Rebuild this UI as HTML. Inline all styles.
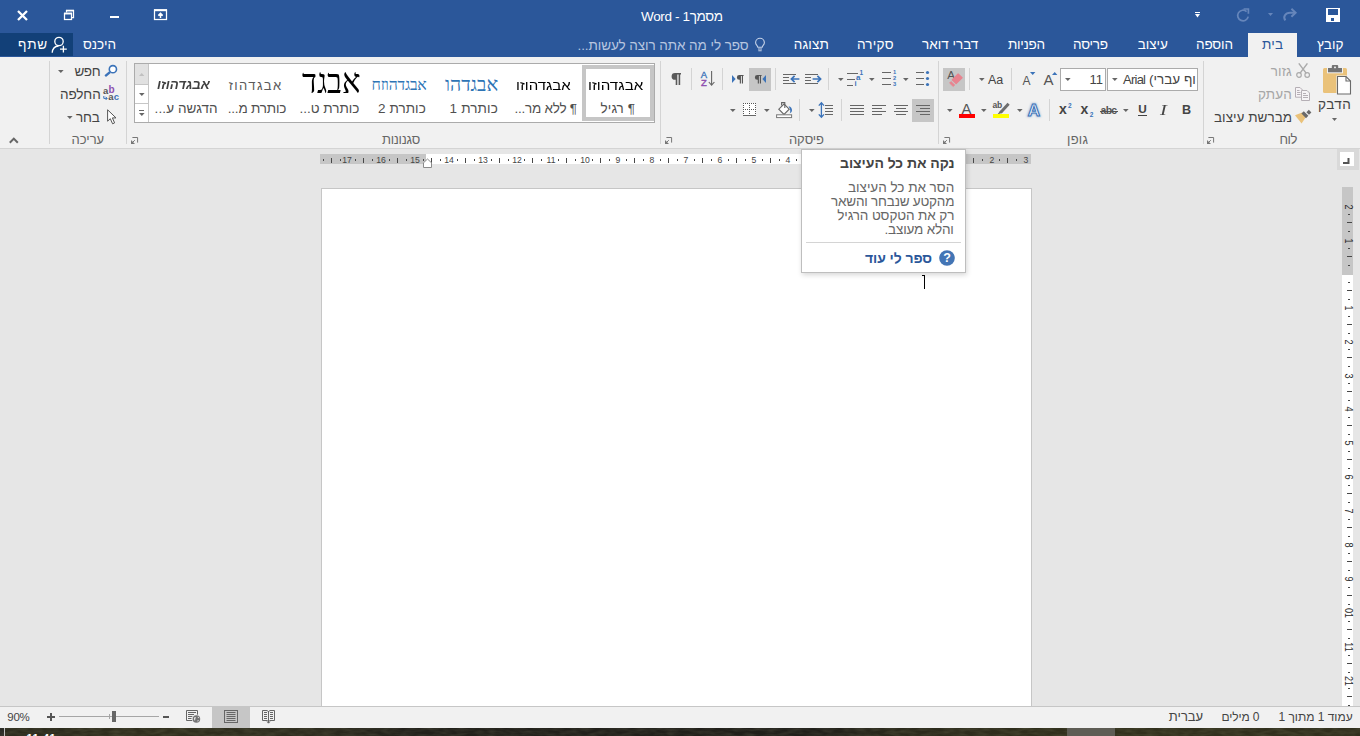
<!DOCTYPE html>
<html lang="he"><head><meta charset="utf-8"><title>Word</title>
<style>
html,body{margin:0;padding:0}
body{width:1360px;height:736px;overflow:hidden;position:relative;background:#e6e6e6;font-family:"Liberation Sans",sans-serif}
.a{position:absolute}
.t{position:absolute;white-space:nowrap;line-height:1}
svg{position:absolute;overflow:visible}
</style></head><body>
<div class="a" style="left:0px;top:0px;width:1360px;height:57px;background:#2b579a;"></div>
<div class="a" style="left:0px;top:33px;width:73px;height:23px;background:#124078;"></div>
<div class="a" style="left:1248px;top:33px;width:49px;height:24px;background:#f1f1f1;"></div>
<div class="a" style="left:0px;top:57px;width:1360px;height:91px;background:#f1f1f1;"></div>
<div class="a" style="left:49px;top:61px;width:1px;height:83px;background:#d4d4d4;"></div>
<div class="a" style="left:126px;top:61px;width:1px;height:83px;background:#d4d4d4;"></div>
<div class="a" style="left:660px;top:61px;width:1px;height:83px;background:#d4d4d4;"></div>
<div class="a" style="left:938px;top:61px;width:1px;height:83px;background:#d4d4d4;"></div>
<div class="a" style="left:1203px;top:61px;width:1px;height:83px;background:#d4d4d4;"></div>
<div class="a" style="left:691px;top:68px;width:1px;height:22px;background:#d4d4d4;"></div>
<div class="a" style="left:722px;top:68px;width:1px;height:22px;background:#d4d4d4;"></div>
<div class="a" style="left:775px;top:68px;width:1px;height:22px;background:#d4d4d4;"></div>
<div class="a" style="left:828px;top:68px;width:1px;height:22px;background:#d4d4d4;"></div>
<div class="a" style="left:969px;top:68px;width:1px;height:22px;background:#d4d4d4;"></div>
<div class="a" style="left:1011px;top:68px;width:1px;height:22px;background:#d4d4d4;"></div>
<div class="a" style="left:799px;top:99px;width:1px;height:22px;background:#d4d4d4;"></div>
<div class="a" style="left:841px;top:99px;width:1px;height:22px;background:#d4d4d4;"></div>
<div class="a" style="left:1049px;top:99px;width:1px;height:22px;background:#d4d4d4;"></div>
<div class="a" style="left:749px;top:68px;width:22px;height:23px;background:#c6c6c6;"></div>
<div class="a" style="left:943px;top:68px;width:22px;height:23px;background:#c6c6c6;"></div>
<div class="a" style="left:912px;top:99px;width:22px;height:23px;background:#c6c6c6;"></div>
<div class="a" style="left:1060px;top:68px;width:46px;height:23px;background:#fff;border:1px solid #ababab;box-sizing:border-box"></div>
<div class="a" style="left:1107px;top:68px;width:91px;height:23px;background:#fff;border:1px solid #ababab;box-sizing:border-box"></div>
<div class="a" style="left:134px;top:63px;width:521px;height:60px;background:#fff;border:1px solid #ababab;box-sizing:border-box"></div>
<div class="a" style="left:135px;top:64px;width:14px;height:20px;background:#e1e1e1;"></div>
<div class="a" style="left:148px;top:64px;width:1px;height:58px;background:#c6c6c6;"></div>
<div class="a" style="left:135px;top:84px;width:13px;height:1px;background:#c6c6c6;"></div>
<div class="a" style="left:135px;top:103px;width:13px;height:1px;background:#c6c6c6;"></div>
<div class="a" style="left:582px;top:65px;width:72px;height:56px;background:#fff;border:4px solid #c6c6c6;box-sizing:border-box"></div>
<div class="a" style="left:0px;top:148px;width:1360px;height:558px;background:#e6e6e6;"></div>
<div class="a" style="left:0px;top:148px;width:1360px;height:1px;background:#d4d4d4;"></div>
<div class="a" style="left:320px;top:154px;width:711px;height:10px;background:#fff;"></div>
<div class="a" style="left:320px;top:154px;width:106px;height:10px;background:#c6c6c6;"></div>
<div class="a" style="left:925px;top:154px;width:106px;height:10px;background:#c6c6c6;"></div>
<div class="a" style="left:321px;top:188px;width:711px;height:519px;background:#fff;border:1px solid #c6c6c6;box-sizing:border-box;border-bottom:none"></div>
<div class="a" style="left:1342px;top:187px;width:11px;height:519px;background:#fff;"></div>
<div class="a" style="left:1342px;top:187px;width:11px;height:88px;background:#c6c6c6;"></div>
<div class="a" style="left:1337px;top:149px;width:22px;height:21px;background:#d9d9d9;"></div>
<div class="a" style="left:1340px;top:152px;width:14px;height:14px;background:#fff;"></div>
<div class="a" style="left:0px;top:706px;width:1360px;height:22px;background:#f1f1f1;border-top:1px solid #c6c6c6;box-sizing:border-box"></div>
<div class="a" style="left:212px;top:707px;width:38px;height:21px;background:#c6c6c6;"></div>
<div class="a" style="left:0px;top:728px;width:1360px;height:8px;background:#2c2b20;background:linear-gradient(90deg,#262622 0,#262622 4px,#2b2a1d 5px,#302f1d 12%,#2c2b1e 24%,#22211b 30%,#201f1a 60%,#2b2a1c 66%,#32311d 80%,#302f1d 100%)"></div>
<svg style="left:0;top:728px" width="1360" height="8"><filter id="nz" x="0" y="0" width="100%" height="100%"><feTurbulence type="fractalNoise" baseFrequency="0.09 0.3" numOctaves="2" seed="7"/><feColorMatrix values="0 0 0 0 0.5  0 0 0 0 0.5  0 0 0 0 0.3  0.9 0 0 0 -0.28"/></filter><rect width="1360" height="8" filter="url(#nz)" opacity="0.28"/></svg>
<div class="a" style="left:1067px;top:728px;width:48px;height:8px;background:#5e5d55;"></div>
<div class="a" style="left:4px;top:728px;width:1px;height:8px;background:#bdbdbd;"></div>
<div class="t" style="left:26.6px;top:732.8px;font-size:11px;font-weight:bold;color:#fff;letter-spacing:0.4px">11:41</div>
<div class="a" style="left:801px;top:149px;width:165px;height:124px;background:#fff;border:1px solid #bebebe;box-sizing:border-box;box-shadow:1px 2px 5px rgba(0,0,0,.16)"></div>
<div class="a" style="left:806px;top:242px;width:155px;height:1px;background:#d4d4d4;"></div>
<div class="a" style="left:924px;top:275px;width:1px;height:14px;background:#000;"></div>
<div class="a" style="left:922px;top:275px;width:2px;height:1px;background:#000;"></div>
<div class="a" style="left:323px;top:159px;width:1px;height:2px;background:#484848"></div>
<div class="a" style="left:331px;top:158px;width:1px;height:5px;background:#484848"></div>
<div class="a" style="left:340px;top:159px;width:1px;height:2px;background:#484848"></div>
<div class="t" style="left:347.09999999999997px;top:159.7px;font-size:9.8px;color:#444;transform:translate(-50%,-50%) scaleX(0.88)">17</div>
<div class="a" style="left:355px;top:159px;width:1px;height:2px;background:#484848"></div>
<div class="a" style="left:363px;top:158px;width:1px;height:5px;background:#484848"></div>
<div class="a" style="left:372px;top:159px;width:1px;height:2px;background:#484848"></div>
<div class="t" style="left:381.02px;top:159.7px;font-size:9.8px;color:#444;transform:translate(-50%,-50%) scaleX(0.88)">16</div>
<div class="a" style="left:389px;top:159px;width:1px;height:2px;background:#484848"></div>
<div class="a" style="left:397px;top:158px;width:1px;height:5px;background:#484848"></div>
<div class="a" style="left:406px;top:159px;width:1px;height:2px;background:#484848"></div>
<div class="t" style="left:414.94px;top:159.7px;font-size:9.8px;color:#444;transform:translate(-50%,-50%) scaleX(0.88)">15</div>
<div class="a" style="left:423px;top:159px;width:1px;height:2px;background:#484848"></div>
<div class="a" style="left:431px;top:158px;width:1px;height:5px;background:#484848"></div>
<div class="a" style="left:440px;top:159px;width:1px;height:2px;background:#484848"></div>
<div class="t" style="left:448.85999999999996px;top:159.7px;font-size:9.8px;color:#444;transform:translate(-50%,-50%) scaleX(0.88)">14</div>
<div class="a" style="left:457px;top:159px;width:1px;height:2px;background:#484848"></div>
<div class="a" style="left:465px;top:158px;width:1px;height:5px;background:#484848"></div>
<div class="a" style="left:474px;top:159px;width:1px;height:2px;background:#484848"></div>
<div class="t" style="left:482.78px;top:159.7px;font-size:9.8px;color:#444;transform:translate(-50%,-50%) scaleX(0.88)">13</div>
<div class="a" style="left:491px;top:159px;width:1px;height:2px;background:#484848"></div>
<div class="a" style="left:499px;top:158px;width:1px;height:5px;background:#484848"></div>
<div class="a" style="left:508px;top:159px;width:1px;height:2px;background:#484848"></div>
<div class="t" style="left:516.7px;top:159.7px;font-size:9.8px;color:#444;transform:translate(-50%,-50%) scaleX(0.88)">12</div>
<div class="a" style="left:524px;top:159px;width:1px;height:2px;background:#484848"></div>
<div class="a" style="left:532px;top:158px;width:1px;height:5px;background:#484848"></div>
<div class="a" style="left:541px;top:159px;width:1px;height:2px;background:#484848"></div>
<div class="t" style="left:550.62px;top:159.7px;font-size:9.8px;color:#444;transform:translate(-50%,-50%) scaleX(0.88)">11</div>
<div class="a" style="left:558px;top:159px;width:1px;height:2px;background:#484848"></div>
<div class="a" style="left:566px;top:158px;width:1px;height:5px;background:#484848"></div>
<div class="a" style="left:575px;top:159px;width:1px;height:2px;background:#484848"></div>
<div class="t" style="left:584.54px;top:159.7px;font-size:9.8px;color:#444;transform:translate(-50%,-50%) scaleX(0.88)">10</div>
<div class="a" style="left:592px;top:159px;width:1px;height:2px;background:#484848"></div>
<div class="a" style="left:600px;top:158px;width:1px;height:5px;background:#484848"></div>
<div class="a" style="left:609px;top:159px;width:1px;height:2px;background:#484848"></div>
<div class="t" style="left:618.46px;top:159.7px;font-size:9.8px;color:#444;transform:translate(-50%,-50%) scaleX(0.88)">9</div>
<div class="a" style="left:626px;top:159px;width:1px;height:2px;background:#484848"></div>
<div class="a" style="left:634px;top:158px;width:1px;height:5px;background:#484848"></div>
<div class="a" style="left:643px;top:159px;width:1px;height:2px;background:#484848"></div>
<div class="t" style="left:652.3800000000001px;top:159.7px;font-size:9.8px;color:#444;transform:translate(-50%,-50%) scaleX(0.88)">8</div>
<div class="a" style="left:660px;top:159px;width:1px;height:2px;background:#484848"></div>
<div class="a" style="left:668px;top:158px;width:1px;height:5px;background:#484848"></div>
<div class="a" style="left:677px;top:159px;width:1px;height:2px;background:#484848"></div>
<div class="t" style="left:686.3000000000001px;top:159.7px;font-size:9.8px;color:#444;transform:translate(-50%,-50%) scaleX(0.88)">7</div>
<div class="a" style="left:694px;top:159px;width:1px;height:2px;background:#484848"></div>
<div class="a" style="left:702px;top:158px;width:1px;height:5px;background:#484848"></div>
<div class="a" style="left:711px;top:159px;width:1px;height:2px;background:#484848"></div>
<div class="t" style="left:720.22px;top:159.7px;font-size:9.8px;color:#444;transform:translate(-50%,-50%) scaleX(0.88)">6</div>
<div class="a" style="left:728px;top:159px;width:1px;height:2px;background:#484848"></div>
<div class="a" style="left:736px;top:158px;width:1px;height:5px;background:#484848"></div>
<div class="a" style="left:745px;top:159px;width:1px;height:2px;background:#484848"></div>
<div class="t" style="left:754.1400000000001px;top:159.7px;font-size:9.8px;color:#444;transform:translate(-50%,-50%) scaleX(0.88)">5</div>
<div class="a" style="left:762px;top:159px;width:1px;height:2px;background:#484848"></div>
<div class="a" style="left:770px;top:158px;width:1px;height:5px;background:#484848"></div>
<div class="a" style="left:779px;top:159px;width:1px;height:2px;background:#484848"></div>
<div class="t" style="left:788.0600000000001px;top:159.7px;font-size:9.8px;color:#444;transform:translate(-50%,-50%) scaleX(0.88)">4</div>
<div class="a" style="left:796px;top:159px;width:1px;height:2px;background:#484848"></div>
<div class="t" style="left:991.5px;top:159.7px;font-size:9.8px;color:#444;transform:translate(-50%,-50%) scaleX(0.88)">2</div>
<div class="t" style="left:1025.6px;top:159.7px;font-size:9.8px;color:#444;transform:translate(-50%,-50%) scaleX(0.88)">3</div>
<div class="a" style="left:973px;top:158px;width:1px;height:5px;background:#484848"></div>
<div class="a" style="left:982px;top:159px;width:1px;height:2px;background:#484848"></div>
<div class="a" style="left:999px;top:159px;width:1px;height:2px;background:#484848"></div>
<div class="a" style="left:1007px;top:158px;width:1px;height:5px;background:#484848"></div>
<div class="a" style="left:1016px;top:159px;width:1px;height:2px;background:#484848"></div>
<svg style="left:422px;top:158px" width="11" height="10" viewBox="0 0 11 10"><path d="M1.5 9.5V4.8L5.5 1l4 3.8v4.7z" fill="#fff" stroke="#8a8a8a" stroke-width="1"/></svg>
<div class="a" style="left:1348px;top:214px;width:2px;height:1px;background:#484848"></div>
<div class="a" style="left:1347px;top:222px;width:5px;height:1px;background:#484848"></div>
<div class="a" style="left:1348px;top:231px;width:2px;height:1px;background:#484848"></div>
<div class="a" style="left:1348px;top:248px;width:2px;height:1px;background:#484848"></div>
<div class="a" style="left:1347px;top:256px;width:5px;height:1px;background:#484848"></div>
<div class="a" style="left:1348px;top:265px;width:2px;height:1px;background:#484848"></div>
<div class="a" style="left:1348px;top:282px;width:2px;height:1px;background:#484848"></div>
<div class="a" style="left:1347px;top:290px;width:5px;height:1px;background:#484848"></div>
<div class="a" style="left:1348px;top:299px;width:2px;height:1px;background:#484848"></div>
<div class="a" style="left:1348px;top:316px;width:2px;height:1px;background:#484848"></div>
<div class="a" style="left:1347px;top:324px;width:5px;height:1px;background:#484848"></div>
<div class="a" style="left:1348px;top:333px;width:2px;height:1px;background:#484848"></div>
<div class="a" style="left:1348px;top:349px;width:2px;height:1px;background:#484848"></div>
<div class="a" style="left:1347px;top:357px;width:5px;height:1px;background:#484848"></div>
<div class="a" style="left:1348px;top:366px;width:2px;height:1px;background:#484848"></div>
<div class="a" style="left:1348px;top:383px;width:2px;height:1px;background:#484848"></div>
<div class="a" style="left:1347px;top:391px;width:5px;height:1px;background:#484848"></div>
<div class="a" style="left:1348px;top:400px;width:2px;height:1px;background:#484848"></div>
<div class="a" style="left:1348px;top:417px;width:2px;height:1px;background:#484848"></div>
<div class="a" style="left:1347px;top:425px;width:5px;height:1px;background:#484848"></div>
<div class="a" style="left:1348px;top:434px;width:2px;height:1px;background:#484848"></div>
<div class="a" style="left:1348px;top:451px;width:2px;height:1px;background:#484848"></div>
<div class="a" style="left:1347px;top:459px;width:5px;height:1px;background:#484848"></div>
<div class="a" style="left:1348px;top:468px;width:2px;height:1px;background:#484848"></div>
<div class="a" style="left:1348px;top:485px;width:2px;height:1px;background:#484848"></div>
<div class="a" style="left:1347px;top:493px;width:5px;height:1px;background:#484848"></div>
<div class="a" style="left:1348px;top:502px;width:2px;height:1px;background:#484848"></div>
<div class="a" style="left:1348px;top:519px;width:2px;height:1px;background:#484848"></div>
<div class="a" style="left:1347px;top:527px;width:5px;height:1px;background:#484848"></div>
<div class="a" style="left:1348px;top:536px;width:2px;height:1px;background:#484848"></div>
<div class="a" style="left:1348px;top:553px;width:2px;height:1px;background:#484848"></div>
<div class="a" style="left:1347px;top:561px;width:5px;height:1px;background:#484848"></div>
<div class="a" style="left:1348px;top:570px;width:2px;height:1px;background:#484848"></div>
<div class="a" style="left:1348px;top:587px;width:2px;height:1px;background:#484848"></div>
<div class="a" style="left:1347px;top:595px;width:5px;height:1px;background:#484848"></div>
<div class="a" style="left:1348px;top:604px;width:2px;height:1px;background:#484848"></div>
<div class="a" style="left:1348px;top:621px;width:2px;height:1px;background:#484848"></div>
<div class="a" style="left:1347px;top:629px;width:5px;height:1px;background:#484848"></div>
<div class="a" style="left:1348px;top:638px;width:2px;height:1px;background:#484848"></div>
<div class="a" style="left:1348px;top:655px;width:2px;height:1px;background:#484848"></div>
<div class="a" style="left:1347px;top:663px;width:5px;height:1px;background:#484848"></div>
<div class="a" style="left:1348px;top:672px;width:2px;height:1px;background:#484848"></div>
<div class="a" style="left:1348px;top:688px;width:2px;height:1px;background:#484848"></div>
<div class="a" style="left:1347px;top:696px;width:5px;height:1px;background:#484848"></div>
<div class="a" style="left:1348px;top:705px;width:2px;height:1px;background:#484848"></div>
<div class="t" style="left:1348px;top:206.6px;font-size:10.3px;color:#2a2a2a;transform:translate(-50%,-50%) rotate(90deg) scaleX(0.88)">2</div>
<div class="t" style="left:1348px;top:240.5px;font-size:10.3px;color:#2a2a2a;transform:translate(-50%,-50%) rotate(90deg) scaleX(0.88)">1</div>
<div class="t" style="left:1348px;top:307.69999999999993px;font-size:10.3px;color:#2a2a2a;transform:translate(-50%,-50%) rotate(90deg) scaleX(0.88)">1</div>
<div class="t" style="left:1348px;top:341.59999999999997px;font-size:10.3px;color:#2a2a2a;transform:translate(-50%,-50%) rotate(90deg) scaleX(0.88)">2</div>
<div class="t" style="left:1348px;top:375.49999999999994px;font-size:10.3px;color:#2a2a2a;transform:translate(-50%,-50%) rotate(90deg) scaleX(0.88)">3</div>
<div class="t" style="left:1348px;top:409.4px;font-size:10.3px;color:#2a2a2a;transform:translate(-50%,-50%) rotate(90deg) scaleX(0.88)">4</div>
<div class="t" style="left:1348px;top:443.29999999999995px;font-size:10.3px;color:#2a2a2a;transform:translate(-50%,-50%) rotate(90deg) scaleX(0.88)">5</div>
<div class="t" style="left:1348px;top:477.19999999999993px;font-size:10.3px;color:#2a2a2a;transform:translate(-50%,-50%) rotate(90deg) scaleX(0.88)">6</div>
<div class="t" style="left:1348px;top:511.0999999999999px;font-size:10.3px;color:#2a2a2a;transform:translate(-50%,-50%) rotate(90deg) scaleX(0.88)">7</div>
<div class="t" style="left:1348px;top:544.9999999999999px;font-size:10.3px;color:#2a2a2a;transform:translate(-50%,-50%) rotate(90deg) scaleX(0.88)">8</div>
<div class="t" style="left:1348px;top:578.9px;font-size:10.3px;color:#2a2a2a;transform:translate(-50%,-50%) rotate(90deg) scaleX(0.88)">9</div>
<div class="t" style="left:1348px;top:612.8px;font-size:10.3px;color:#2a2a2a;transform:translate(-50%,-50%) rotate(90deg) scaleX(0.88)">01</div>
<div class="t" style="left:1348px;top:646.6999999999999px;font-size:10.3px;color:#2a2a2a;transform:translate(-50%,-50%) rotate(90deg) scaleX(0.88)">11</div>
<div class="t" style="left:1348px;top:680.5999999999999px;font-size:10.3px;color:#2a2a2a;transform:translate(-50%,-50%) rotate(90deg) scaleX(0.88)">21</div>
<svg style="left:1343px;top:158px" width="7" height="6" viewBox="0 0 7 6"><path d="M5.5 0V5H0" fill="none" stroke="#555" stroke-width="2"/></svg>
<!-- window controls -->
<svg style="left:17px;top:10px" width="11" height="11" viewBox="0 0 11 11"><path d="M1 1L10 10M10 1L1 10" stroke="#fff" stroke-width="2.3" fill="none"/></svg>
<svg style="left:64px;top:9px" width="11" height="12" viewBox="0 0 11 12"><path d="M2.5 3.5V1.5H9.5V8.5H7.5" fill="none" stroke="#fff" stroke-width="1.25"/><path d="M2 1.5H10" stroke="#fff" stroke-width="1.6"/><rect x="0.5" y="4.5" width="7" height="6" fill="none" stroke="#fff" stroke-width="1.25"/><path d="M0 4.5H8" stroke="#fff" stroke-width="1.8"/></svg>
<div class="a" style="left:110px;top:16px;width:9px;height:2px;background:#fff"></div>
<svg style="left:154px;top:9px" width="13" height="11" viewBox="0 0 13 11"><rect x="0.5" y="1" width="12" height="9.5" fill="none" stroke="#fff" stroke-width="1.25"/><path d="M0 1.2H13" stroke="#fff" stroke-width="2"/><path d="M6.5 9V4.5M4.3 6.6L6.5 4.4L8.7 6.6" fill="none" stroke="#fff" stroke-width="1.5"/></svg>
<!-- save -->
<svg style="left:1326px;top:8px" width="14" height="14" viewBox="0 0 14 14"><path d="M0 0H14V14H0z" fill="#fff"/><rect x="2" y="1" width="10" height="6" fill="#2b579a"/><rect x="5" y="10" width="3" height="3" fill="#2b579a"/></svg>
<!-- redo (disabled) -->
<svg style="left:1283px;top:8px" width="14" height="13" viewBox="0 0 14 13"><path d="M2.4 12.4C-0.4 8.8 2.4 4.8 7 4.8H12" fill="none" stroke="#6686bb" stroke-width="2"/><path d="M8.4 0.8L12.6 4.8L8.4 8.8" fill="none" stroke="#6686bb" stroke-width="2"/></svg>
<svg style="left:1268px;top:13px" width="5" height="3" viewBox="0 0 5 3"><path d="M0 0H5L2.5 3z" fill="#6686bb"/></svg>
<!-- undo/repeat (disabled) -->
<svg style="left:1236px;top:8px" width="14" height="13" viewBox="0 0 14 13"><path d="M10.6 3.6A5.3 5.3 0 1 0 12.2 8.6" fill="none" stroke="#6686bb" stroke-width="1.7"/><path d="M7.6 1H12.4V5.8" fill="none" stroke="#6686bb" stroke-width="1.7"/></svg>
<!-- QAT customize -->
<div class="a" style="left:1195px;top:12px;width:5px;height:1px;background:#fff"></div>
<svg style="left:1195px;top:14px" width="5" height="4" viewBox="0 0 5 4"><path d="M0 0H5L2.5 3.4z" fill="#fff"/></svg>
<!-- lightbulb -->
<svg style="left:754px;top:38px" width="12" height="14" viewBox="0 0 12 14"><path d="M3.8 9.3C3.8 7.8 1.6 6.9 1.6 4.7A4.3 4.3 0 0 1 10.4 4.7C10.4 6.9 8.2 7.8 8.2 9.3z" fill="none" stroke="#c5d2e8" stroke-width="1.1"/><path d="M4 11H8M4.3 12.8H7.7" stroke="#c5d2e8" stroke-width="1.1"/></svg>
<!-- share person -->
<svg style="left:51px;top:36px" width="17" height="18" viewBox="0 0 17 18"><circle cx="8" cy="5.5" r="4.2" fill="none" stroke="#fff" stroke-width="1.3"/><path d="M1.2 16.8C1.5 12.8 4.2 10.2 7.6 10" fill="none" stroke="#fff" stroke-width="1.3"/><path d="M12.4 9.8V16.6M9 13.2H15.8" stroke="#fff" stroke-width="1.3"/></svg>
<!-- paste -->
<svg style="left:1323px;top:65px" width="29" height="30" viewBox="0 0 29 30"><rect x="0" y="3" width="24" height="25" rx="1.5" fill="#eac27a"/><rect x="4" y="2" width="16" height="6.3" fill="#f1f1f1"/><rect x="5" y="3" width="14" height="4.3" fill="#737373"/><rect x="8.8" y="0" width="6.4" height="4" rx="1" fill="#737373"/><rect x="11.2" y="1.6" width="1.6" height="1.6" fill="#fff"/><path d="M13.4 10.4H23.6L28.6 15.4V30H13.4z" fill="#f1f1f1"/><path d="M14.5 11.5H23L27.5 16V29H14.5z" fill="#fff" stroke="#6a6a6a" stroke-width="1.1"/><path d="M23 11.5V16H27.5" fill="none" stroke="#6a6a6a" stroke-width="1.1"/></svg>
<svg style="left:1332px;top:118px" width="5" height="3" viewBox="0 0 5 3"><path d="M0 0H5L2.5 3z" fill="#666"/></svg>
<!-- scissors (disabled) -->
<svg style="left:1296px;top:63px" width="15" height="15" viewBox="0 0 15 15"><path d="M2.8 0.4L10.3 10.4M11.4 0.4L3.9 10.4" stroke="#ababab" stroke-width="1.5" fill="none"/><circle cx="3" cy="12" r="2.3" fill="none" stroke="#ababab" stroke-width="1.2"/><circle cx="11.2" cy="12" r="2.3" fill="none" stroke="#ababab" stroke-width="1.2"/></svg>
<!-- copy (disabled) -->
<svg style="left:1295px;top:87px" width="16" height="14" viewBox="0 0 16 14"><path d="M0.5 0.5H5L7.5 3V10.2H0.5z" fill="#f6f3f6" stroke="#b5afb5" stroke-width="1"/><path d="M2 3.5H4.5M2 5.5H5.5M2 7.5H5.5" stroke="#b5afb5" stroke-width="1"/><path d="M6.5 3.5H12L14.5 6V13.5H6.5z" fill="#f6f3f6" stroke="#b5afb5" stroke-width="1"/><path d="M8 6.5H11M8 8.5H13M8 10.5H13" stroke="#b5afb5" stroke-width="1"/></svg>
<!-- format painter -->
<svg style="left:1295px;top:109px" width="17" height="15" viewBox="0 0 17 15"><path d="M0 6.2L7.2 3.6L11.2 7.6L6.6 14.4z" fill="#eac27a"/><path d="M7 3.2L9.4 0.8L14 5.4L11.6 7.8z" fill="#6a6a6a" transform="translate(-0.6,1.4)"/><path d="M11.2 2.6L13.6 0.2L16.2 2.8L13.8 5.2z" fill="#6a6a6a" transform="translate(0.2,0.6)"/></svg>
<svg style="left:57.7px;top:70px" width="6" height="3" viewBox="0 0 6 3"><path d="M0 0H5.6L2.8 3z" fill="#666"/></svg>
<svg style="left:67px;top:116px" width="6" height="3" viewBox="0 0 6 3"><path d="M0 0H5.6L2.8 3z" fill="#666"/></svg>
<svg style="left:730px;top:109px" width="6" height="3" viewBox="0 0 6 3"><path d="M0 0H5.6L2.8 3z" fill="#666"/></svg>
<svg style="left:764px;top:109px" width="6" height="3" viewBox="0 0 6 3"><path d="M0 0H5.6L2.8 3z" fill="#666"/></svg>
<svg style="left:809px;top:109px" width="6" height="3" viewBox="0 0 6 3"><path d="M0 0H5.6L2.8 3z" fill="#666"/></svg>
<svg style="left:838px;top:78px" width="6" height="3" viewBox="0 0 6 3"><path d="M0 0H5.6L2.8 3z" fill="#666"/></svg>
<svg style="left:869px;top:78px" width="6" height="3" viewBox="0 0 6 3"><path d="M0 0H5.6L2.8 3z" fill="#666"/></svg>
<svg style="left:903px;top:78px" width="6" height="3" viewBox="0 0 6 3"><path d="M0 0H5.6L2.8 3z" fill="#666"/></svg>
<svg style="left:947px;top:109px" width="6" height="3" viewBox="0 0 6 3"><path d="M0 0H5.6L2.8 3z" fill="#666"/></svg>
<svg style="left:981px;top:109px" width="6" height="3" viewBox="0 0 6 3"><path d="M0 0H5.6L2.8 3z" fill="#666"/></svg>
<svg style="left:1017px;top:109px" width="6" height="3" viewBox="0 0 6 3"><path d="M0 0H5.6L2.8 3z" fill="#666"/></svg>
<svg style="left:979px;top:78px" width="6" height="3" viewBox="0 0 6 3"><path d="M0 0H5.6L2.8 3z" fill="#666"/></svg>
<svg style="left:1065px;top:78px" width="6" height="3" viewBox="0 0 6 3"><path d="M0 0H5.6L2.8 3z" fill="#666"/></svg>
<svg style="left:1112px;top:78px" width="6" height="3" viewBox="0 0 6 3"><path d="M0 0H5.6L2.8 3z" fill="#666"/></svg>
<svg style="left:1123px;top:109px" width="6" height="3" viewBox="0 0 6 3"><path d="M0 0H5.6L2.8 3z" fill="#666"/></svg>
<div class="t" style="left:1182px;top:103.6px;font-size:12.6px;font-family:'Liberation Sans',sans-serif;color:#444;font-weight:bold">B</div>
<div class="t" style="left:1160.4px;top:102.6px;font-size:14.5px;font-family:'Liberation Serif',serif;color:#444;font-style:italic;transform:scaleX(1.4);transform-origin:0 0">I</div>
<div class="t" style="left:1138.2px;top:103.7px;font-size:11.8px;font-family:'Liberation Sans',sans-serif;color:#444;font-weight:bold">U</div>
<div class="a" style="left:1138px;top:115px;width:9px;height:1px;background:#444"></div>
<div class="t" style="left:1100.6px;top:104.9px;font-size:10.5px;font-family:'Liberation Sans',sans-serif;color:#555;font-weight:bold;letter-spacing:-0.75px">abc</div>
<div class="a" style="left:1100px;top:111px;width:18px;height:1px;background:#555"></div>
<div class="t" style="left:1080.6px;top:102px;font-size:14px;font-family:'Liberation Sans',sans-serif;color:#444;font-weight:bold">x</div>
<div class="t" style="left:1089.8px;top:111.6px;font-size:6.5px;font-family:'Liberation Sans',sans-serif;color:#3b73b9;font-weight:bold">2</div>
<div class="t" style="left:1059px;top:102px;font-size:14px;font-family:'Liberation Sans',sans-serif;color:#444;font-weight:bold">x</div>
<div class="t" style="left:1068px;top:102.6px;font-size:6.5px;font-family:'Liberation Sans',sans-serif;color:#3b73b9;font-weight:bold">2</div>
<svg style="left:1025px;top:100px" width="18" height="19" viewBox="0 0 18 19"><defs><filter id="gl" x="-30%" y="-30%" width="160%" height="160%"><feGaussianBlur stdDeviation="0.9"/></filter></defs><text x="9" y="15.6" text-anchor="middle" font-family="Liberation Sans" font-weight="bold" font-size="17" fill="none" stroke="#3b73b9" stroke-width="2.2" filter="url(#gl)" opacity="0.4">A</text><text x="9" y="15.6" text-anchor="middle" font-family="Liberation Sans" font-weight="bold" font-size="17" fill="#fff" stroke="#3b73b9" stroke-width="1.1">A</text></svg>
<div class="t" style="left:992.6px;top:101.2px;font-size:8.5px;font-family:'Liberation Sans',sans-serif;color:#555;font-weight:bold;letter-spacing:-0.3px">ab</div>
<svg style="left:996px;top:103px" width="14" height="12" viewBox="0 0 14 12"><path d="M12.6 0.8L4.6 9.4" stroke="#6e6e6e" stroke-width="3" fill="none"/><path d="M4.4 7.4L1.4 11.4L6.6 9.8z" fill="#6e6e6e"/></svg>
<div class="a" style="left:993px;top:114px;width:16px;height:4px;background:#ffff00"></div>
<div class="t" style="left:961.4px;top:101.5px;font-size:14.8px;font-family:'Liberation Sans',sans-serif;color:#555;">A</div>
<div class="a" style="left:959px;top:114px;width:16px;height:4px;background:#ff0000"></div>
<div class="t" style="left:947.2px;top:70.2px;font-size:11.5px;font-family:'Liberation Sans',sans-serif;color:#555;">A</div>
<svg style="left:948px;top:72px" width="16" height="16" viewBox="0 0 16 16"><path d="M10.1 1.9L14.1 5.7L8.1 11.6L4.2 7.9z" fill="#e8838f" stroke="#e8838f" stroke-width="1.2" stroke-linejoin="round"/><path d="M3 9.4L6.8 13L5.2 14.6L1.5 11z" fill="#e8838f" stroke="#e8838f" stroke-width="0.6" stroke-linejoin="round"/></svg>
<div class="t" style="left:1022.6px;top:74.6px;font-size:12px;font-family:'Liberation Sans',sans-serif;color:#555;">A</div>
<svg style="left:1030px;top:72px" width="6" height="3" viewBox="0 0 6 3"><path d="M0 0H5.4L2.7 3z" fill="#3b73b9"/></svg>
<div class="t" style="left:1043.4px;top:71.6px;font-size:15px;font-family:'Liberation Sans',sans-serif;color:#555;">A</div>
<svg style="left:1052px;top:72px" width="6" height="3" viewBox="0 0 6 3"><path d="M0 3H5.4L2.7 0z" fill="#3b73b9"/></svg>
<div class="a" style="left:916px;top:72px;width:8px;height:1px;background:#666"></div>
<svg style="left:926px;top:71px" width="3" height="3" viewBox="0 0 3 3"><circle cx="1.5" cy="1.5" r="1.6" fill="#3b73b9"/></svg>
<div class="a" style="left:916px;top:78px;width:8px;height:1px;background:#666"></div>
<svg style="left:926px;top:77px" width="3" height="3" viewBox="0 0 3 3"><circle cx="1.5" cy="1.5" r="1.6" fill="#3b73b9"/></svg>
<div class="a" style="left:916px;top:84px;width:8px;height:1px;background:#666"></div>
<svg style="left:926px;top:83px" width="3" height="3" viewBox="0 0 3 3"><circle cx="1.5" cy="1.5" r="1.6" fill="#3b73b9"/></svg>
<div class="a" style="left:882px;top:72px;width:9px;height:1px;background:#666"></div>
<div class="t" style="left:893px;top:69.8px;font-size:5.8px;font-family:'Liberation Sans',sans-serif;color:#3b73b9;font-weight:bold">1</div>
<div class="a" style="left:882px;top:78px;width:9px;height:1px;background:#666"></div>
<div class="t" style="left:893px;top:75.8px;font-size:5.8px;font-family:'Liberation Sans',sans-serif;color:#3b73b9;font-weight:bold">2</div>
<div class="a" style="left:882px;top:84px;width:9px;height:1px;background:#666"></div>
<div class="t" style="left:893px;top:81.8px;font-size:5.8px;font-family:'Liberation Sans',sans-serif;color:#3b73b9;font-weight:bold">3</div>
<div class="a" style="left:847px;top:73px;width:11px;height:1px;background:#666"></div>
<div class="t" style="left:859.6px;top:70.4px;font-size:6.5px;font-family:'Liberation Sans',sans-serif;color:#3b73b9;font-weight:bold">1</div>
<div class="a" style="left:847px;top:79px;width:8px;height:1px;background:#666"></div>
<div class="t" style="left:856px;top:74.2px;font-size:8px;font-family:'Liberation Sans',sans-serif;color:#3b73b9;font-weight:bold">a</div>
<div class="a" style="left:847px;top:85px;width:6px;height:1px;background:#666"></div>
<div class="t" style="left:854.4px;top:80.4px;font-size:7.5px;font-family:'Liberation Sans',sans-serif;color:#3b73b9;font-weight:bold">i</div>
<div class="a" style="left:783px;top:74px;width:13px;height:1px;background:#666"></div>
<div class="a" style="left:783px;top:77px;width:6px;height:1px;background:#666"></div>
<div class="a" style="left:783px;top:80px;width:6px;height:1px;background:#666"></div>
<div class="a" style="left:783px;top:83px;width:13px;height:1px;background:#666"></div>
<svg style="left:790px;top:75px" width="10" height="8" viewBox="0 0 10 8"><path d="M9.4 4H1.6M4.6 0.8L1.4 4L4.6 7.2" fill="none" stroke="#3b73b9" stroke-width="1.7"/></svg>
<div class="a" style="left:805px;top:74px;width:13px;height:1px;background:#666"></div>
<div class="a" style="left:805px;top:77px;width:6px;height:1px;background:#666"></div>
<div class="a" style="left:805px;top:80px;width:6px;height:1px;background:#666"></div>
<div class="a" style="left:805px;top:83px;width:13px;height:1px;background:#666"></div>
<svg style="left:812px;top:75px" width="10" height="8" viewBox="0 0 10 8"><path d="M0.6 4H8.4M5.4 0.8L8.6 4L5.4 7.2" fill="none" stroke="#3b73b9" stroke-width="1.7"/></svg>
<svg style="left:671px;top:73px" width="10" height="12" viewBox="0 0 10 12"><path d="M4.4 0H10V1.4H9.2V12H7.6V1.4H6.3V12H4.7V6.8H4A3.4 3.4 0 0 1 4 0z" fill="#5a5a5a"/></svg>
<svg style="left:732px;top:75px" width="4" height="8" viewBox="0 0 4 8"><path d="M0 0L3.6 4L0 8z" fill="#3b73b9"/></svg>
<svg style="left:736.4px;top:74.8px" width="8" height="8.6" viewBox="0 0 10 12"><path d="M4.4 0H10V1.4H9.2V12H7.6V1.4H6.3V12H4.7V6.8H4A3.4 3.4 0 0 1 4 0z" fill="#555"/></svg>
<svg style="left:753.6px;top:74.8px" width="8" height="8.6" viewBox="0 0 10 12"><path d="M4.4 0H10V1.4H9.2V12H7.6V1.4H6.3V12H4.7V6.8H4A3.4 3.4 0 0 1 4 0z" fill="#555"/></svg>
<svg style="left:762px;top:75px" width="4" height="8" viewBox="0 0 4 8"><path d="M4 0L0.4 4L4 8z" fill="#3b73b9"/></svg>
<div class="t" style="left:700.8px;top:70.3px;font-size:9.5px;font-family:'Liberation Sans',sans-serif;color:#3b73b9;-webkit-text-stroke:0.35px #3b73b9">A</div>
<div class="t" style="left:701px;top:78.3px;font-size:9.5px;font-family:'Liberation Sans',sans-serif;color:#8e4fb0;-webkit-text-stroke:0.35px #8e4fb0">Z</div>
<svg style="left:708px;top:71px" width="8" height="15" viewBox="0 0 8 15"><path d="M3.6 0V14M0.8 11L3.6 14.2L6.4 11" fill="none" stroke="#666" stroke-width="1.1"/></svg>
<div class="a" style="left:850px;top:105px;width:14px;height:1px;background:#666"></div>
<div class="a" style="left:850px;top:108px;width:14px;height:1px;background:#666"></div>
<div class="a" style="left:850px;top:111px;width:14px;height:1px;background:#666"></div>
<div class="a" style="left:850px;top:114px;width:14px;height:1px;background:#666"></div>
<div class="a" style="left:872px;top:105px;width:14px;height:1px;background:#666"></div>
<div class="a" style="left:872px;top:108px;width:10px;height:1px;background:#666"></div>
<div class="a" style="left:872px;top:111px;width:14px;height:1px;background:#666"></div>
<div class="a" style="left:872px;top:114px;width:10px;height:1px;background:#666"></div>
<div class="a" style="left:894px;top:105px;width:14px;height:1px;background:#666"></div>
<div class="a" style="left:896px;top:108px;width:10px;height:1px;background:#666"></div>
<div class="a" style="left:894px;top:111px;width:14px;height:1px;background:#666"></div>
<div class="a" style="left:896px;top:114px;width:10px;height:1px;background:#666"></div>
<div class="a" style="left:916px;top:105px;width:14px;height:1px;background:#666"></div>
<div class="a" style="left:920px;top:108px;width:10px;height:1px;background:#666"></div>
<div class="a" style="left:916px;top:111px;width:14px;height:1px;background:#666"></div>
<div class="a" style="left:920px;top:114px;width:10px;height:1px;background:#666"></div>
<svg style="left:818px;top:102px" width="7" height="16" viewBox="0 0 7 16"><path d="M3.4 0.8V15.2M0.8 3.6L3.4 0.8L6 3.6M0.8 12.4L3.4 15.2L6 12.4" fill="none" stroke="#3b73b9" stroke-width="1.3"/></svg>
<div class="a" style="left:825px;top:105px;width:8px;height:1px;background:#666"></div>
<div class="a" style="left:825px;top:108px;width:8px;height:1px;background:#666"></div>
<div class="a" style="left:825px;top:111px;width:8px;height:1px;background:#666"></div>
<div class="a" style="left:825px;top:114px;width:8px;height:1px;background:#666"></div>
<svg style="left:776px;top:101px" width="17" height="17" viewBox="0 0 17 17"><path d="M8 3L13.2 8.2L8 13.4L2.8 8.2z" fill="#fff" stroke="#666" stroke-width="1.1"/><path d="M5.6 4.6V1.6H8.8V7" fill="none" stroke="#666" stroke-width="1.1"/><path d="M12.6 5.2C15 5.6 16.2 7.6 16 9.6C15.8 11 15 12 13.8 12.2C14.6 10.6 14.6 8.4 12.6 5.2z" fill="#3b73b9"/><rect x="0.6" y="13.8" width="15" height="2.8" fill="#fff" stroke="#777" stroke-width="1"/></svg>
<svg style="left:743px;top:102px" width="14" height="14" viewBox="0 0 14 14"><rect x="0" y="1" width="13" height="12" fill="#fff"/><path d="M0 1.5H13M0 7.5H13M0.5 1V13M6.5 1V13M12.5 1V13" stroke="#555" stroke-width="1" stroke-dasharray="1 1" fill="none" shape-rendering="crispEdges"/><path d="M0 13.5H13" stroke="#666" stroke-width="1" shape-rendering="crispEdges"/></svg>
<svg style="left:104px;top:64px" width="14" height="14" viewBox="0 0 14 14"><circle cx="8.9" cy="5.2" r="3.6" fill="#fff" stroke="#3b73b9" stroke-width="1.6"/><path d="M6 8.2L1.2 12.2" stroke="#3b73b9" stroke-width="2.4" fill="none"/></svg>
<div class="t" style="left:103px;top:85.6px;font-size:9.5px;font-family:'Liberation Sans',sans-serif;color:#555;font-weight:bold">a</div>
<div class="t" style="left:108.6px;top:85.2px;font-size:10px;font-family:'Liberation Sans',sans-serif;color:#8e4fb0;font-weight:bold">b</div>
<div class="t" style="left:108.2px;top:92.4px;font-size:9.5px;font-family:'Liberation Sans',sans-serif;color:#555;font-weight:bold">a</div>
<div class="t" style="left:113.8px;top:92.4px;font-size:9.5px;font-family:'Liberation Sans',sans-serif;color:#3b73b9;font-weight:bold">c</div>
<svg style="left:103px;top:96px" width="5" height="5" viewBox="0 0 5 5"><path d="M0.8 0V2.4H4M2.6 0.8L4.2 2.4L2.6 4" fill="none" stroke="#3b73b9" stroke-width="1"/></svg>
<svg style="left:107px;top:109px" width="10" height="16" viewBox="0 0 10 16"><path d="M0.6 0.8V12.2L3.3 9.7L5.6 14.8L7.6 13.9L5.4 8.9H9z" fill="#fff" stroke="#555" stroke-width="1"/></svg>
<svg style="left:9px;top:137px" width="10" height="7" viewBox="0 0 10 7"><path d="M0.8 5.8L4.8 1.6L8.8 5.8" fill="none" stroke="#666" stroke-width="2"/></svg>
<svg style="left:139px;top:73px" width="6" height="3" viewBox="0 0 6 3"><path d="M0 3H5.4L2.7 0z" fill="#c0c0c0"/></svg>
<svg style="left:139px;top:93px" width="6" height="3" viewBox="0 0 6 3"><path d="M0 0H5.6L2.8 3z" fill="#666"/></svg>
<div class="a" style="left:139px;top:110px;width:5px;height:1px;background:#666"></div>
<svg style="left:139px;top:113px" width="6" height="3" viewBox="0 0 6 3"><path d="M0 0H5.6L2.8 3z" fill="#666"/></svg>
<svg style="left:131px;top:137px" width="8" height="8" viewBox="0 0 8 8"><path d="M1.4 0.5H6.6V5.6" fill="none" stroke="#777" stroke-width="1"/><path d="M0 3V7H4z" fill="#777"/><path d="M1.4 5.6L3.8 3.2" stroke="#777" stroke-width="1" fill="none"/></svg>
<svg style="left:665px;top:137px" width="8" height="8" viewBox="0 0 8 8"><path d="M1.4 0.5H6.6V5.6" fill="none" stroke="#777" stroke-width="1"/><path d="M0 3V7H4z" fill="#777"/><path d="M1.4 5.6L3.8 3.2" stroke="#777" stroke-width="1" fill="none"/></svg>
<svg style="left:943px;top:137px" width="8" height="8" viewBox="0 0 8 8"><path d="M1.4 0.5H6.6V5.6" fill="none" stroke="#777" stroke-width="1"/><path d="M0 3V7H4z" fill="#777"/><path d="M1.4 5.6L3.8 3.2" stroke="#777" stroke-width="1" fill="none"/></svg>
<svg style="left:1207px;top:137px" width="8" height="8" viewBox="0 0 8 8"><path d="M1.4 0.5H6.6V5.6" fill="none" stroke="#777" stroke-width="1"/><path d="M0 3V7H4z" fill="#777"/><path d="M1.4 5.6L3.8 3.2" stroke="#777" stroke-width="1" fill="none"/></svg>
<div class="a" style="left:47px;top:716px;width:8px;height:2px;background:#555"></div>
<div class="a" style="left:50px;top:713px;width:2px;height:8px;background:#555"></div>
<div class="a" style="left:59px;top:716px;width:100px;height:1px;background:#a6a6a6"></div>
<div class="a" style="left:109px;top:714px;width:1px;height:5px;background:#a6a6a6"></div>
<div class="a" style="left:112px;top:711px;width:4px;height:11px;background:#666"></div>
<div class="a" style="left:163px;top:716px;width:6px;height:2px;background:#555"></div>
<svg style="left:186px;top:710px" width="15" height="14" viewBox="0 0 15 14"><path d="M9 10.5H0.5V0.5H11.5V5" fill="none" stroke="#666" stroke-width="1"/><path d="M2 2.5H10M2 4.5H8M2 6.5H6.5M2 8.5H5.5" stroke="#666" stroke-width="1"/><circle cx="10.4" cy="9" r="4.5" fill="#f1f1f1"/><circle cx="10.4" cy="9" r="3.8" fill="#747474"/><path d="M8.2 7.6C8.8 6.8 9.8 6.8 9.8 7.6C9.8 8.4 9 8.8 9.2 9.8C9.3 10.6 8.8 10.8 8.4 10.2C8 9.4 7.9 8.4 8.2 7.6zM11.8 6.6C12.6 6.9 13.1 7.6 13.3 8.3C12.7 8.4 12.1 8.1 11.8 7.5zM11.6 10.2C12.2 9.9 12.7 10.2 12.7 10.8C12.4 11.3 12 11.6 11.6 11.7z" fill="#ededed"/></svg>
<svg style="left:224px;top:710px" width="14" height="13" viewBox="0 0 14 13"><rect x="0.5" y="0.5" width="13" height="12" fill="none" stroke="#666" stroke-width="1"/><path d="M2.5 2.5H11.5M2.5 4.5H11.5M2.5 6.5H11.5M2.5 8.5H11.5M2.5 10.5H11.5" stroke="#666" stroke-width="1"/></svg>
<svg style="left:262px;top:710px" width="14" height="14" viewBox="0 0 14 14"><path d="M0.5 0.5H5L6.5 1.6L8 0.5H12.5V10.5H8L6.5 11.6L5 10.5H0.5z" fill="none" stroke="#666" stroke-width="1"/><path d="M6.5 1V13M5 11.6L6.5 13.2L8 11.6" fill="none" stroke="#666" stroke-width="1"/><path d="M2 2.5H5M2 4.5H5M2 6.5H5M2 8.5H5M8 2.5H11M8 4.5H11M8 6.5H11M8 8.5H11" stroke="#666" stroke-width="1"/></svg>
<svg style="left:939px;top:250px" width="16" height="16" viewBox="0 0 16 16"><circle cx="8" cy="8" r="7.8" fill="#4375b5"/><text x="8" y="12.4" text-anchor="middle" font-family="Liberation Sans" font-weight="bold" font-size="12.5" fill="#fff">?</text></svg><div class="a" style="left:1108px;top:69px;width:89px;height:21px;overflow:hidden"><div class="t" dir="rtl" style="left:15px;top:3.7px;font-size:13.5px;color:#444">וף עברי) <span style="letter-spacing:-0.75px;font-size:13px">Arial</span></div></div>

<div class="t" dir="rtl" style="left:641.0px;top:9.67px;font-size:13.5px;font-family:'Liberation Sans',sans-serif;color:#ffffff;letter-spacing:-0.36px;">מסמך1 - Word</div>
<div class="t" dir="rtl" style="left:1317.0px;top:37.67px;font-size:13.5px;font-family:'Liberation Sans',sans-serif;color:#ffffff;letter-spacing:0.0px;">קובץ</div>
<div class="t" dir="rtl" style="left:1262.0px;top:37.67px;font-size:13.5px;font-family:'Liberation Sans',sans-serif;color:#2b579a;letter-spacing:0.25px;">בית</div>
<div class="t" dir="rtl" style="left:1196.0px;top:37.67px;font-size:13.5px;font-family:'Liberation Sans',sans-serif;color:#ffffff;letter-spacing:-0.15px;">הוספה</div>
<div class="t" dir="rtl" style="left:1137.8px;top:37.67px;font-size:13.5px;font-family:'Liberation Sans',sans-serif;color:#ffffff;letter-spacing:-0.05px;">עיצוב</div>
<div class="t" dir="rtl" style="left:1073.0px;top:37.67px;font-size:13.5px;font-family:'Liberation Sans',sans-serif;color:#ffffff;letter-spacing:-0.25px;">פריסה</div>
<div class="t" dir="rtl" style="left:1008.0px;top:37.67px;font-size:13.5px;font-family:'Liberation Sans',sans-serif;color:#ffffff;letter-spacing:-0.28px;">הפניות</div>
<div class="t" dir="rtl" style="left:922.0px;top:37.67px;font-size:13.5px;font-family:'Liberation Sans',sans-serif;color:#ffffff;letter-spacing:0.0px;">דברי דואר</div>
<div class="t" dir="rtl" style="left:857.0px;top:37.67px;font-size:13.5px;font-family:'Liberation Sans',sans-serif;color:#ffffff;letter-spacing:0.2px;">סקירה</div>
<div class="t" dir="rtl" style="left:793.8px;top:37.67px;font-size:13.5px;font-family:'Liberation Sans',sans-serif;color:#ffffff;letter-spacing:0.15px;">תצוגה</div>
<div class="t" dir="rtl" style="left:577.5px;top:38.67px;font-size:13.5px;font-family:'Liberation Sans',sans-serif;color:#b7c6e0;letter-spacing:-0.08px;">ספר לי מה אתה רוצה לעשות...</div>
<div class="t" dir="rtl" style="left:83.0px;top:37.67px;font-size:13.5px;font-family:'Liberation Sans',sans-serif;color:#ffffff;letter-spacing:0.0px;">היכנס</div>
<div class="t" dir="rtl" style="left:18.0px;top:37.67px;font-size:13.5px;font-family:'Liberation Sans',sans-serif;color:#ffffff;letter-spacing:0.75px;">שתף</div>
<div class="t" dir="rtl" style="left:1318.0px;top:97.67px;font-size:13.5px;font-family:'Liberation Sans',sans-serif;color:#444444;letter-spacing:0.47px;">הדבק</div>
<div class="t" dir="rtl" style="left:1270.75px;top:64.67px;font-size:13.5px;font-family:'Liberation Sans',sans-serif;color:#a6a6a6;letter-spacing:0.08px;">גזור</div>
<div class="t" dir="rtl" style="left:1258.0px;top:87.67px;font-size:13.5px;font-family:'Liberation Sans',sans-serif;color:#a6a6a6;letter-spacing:0.1px;">העתק</div>
<div class="t" dir="rtl" style="left:1214.0px;top:110.67px;font-size:13.5px;font-family:'Liberation Sans',sans-serif;color:#444444;letter-spacing:0.03px;">מברשת עיצוב</div>
<div class="t" dir="rtl" style="left:1279.5px;top:133.1px;font-size:13px;font-family:'Liberation Sans',sans-serif;color:#666666;letter-spacing:-0.5px;">לוח</div>
<div class="t" dir="rtl" style="left:1089.6px;top:73.1px;font-size:13px;font-family:'Liberation Sans',sans-serif;color:#444444;letter-spacing:-0.1px;">11</div>
<div class="t" dir="rtl" style="left:988.0px;top:73.52px;font-size:12.5px;font-family:'Liberation Sans',sans-serif;color:#444444;letter-spacing:0.0px;">Aa</div>
<div class="t" dir="rtl" style="left:1067.0px;top:133.1px;font-size:13px;font-family:'Liberation Sans',sans-serif;color:#666666;letter-spacing:0.25px;">גופן</div>
<div class="t" dir="rtl" style="left:789.0px;top:133.1px;font-size:13px;font-family:'Liberation Sans',sans-serif;color:#666666;letter-spacing:-0.12px;">פיסקה</div>
<div class="t" dir="rtl" style="left:382.0px;top:133.1px;font-size:13px;font-family:'Liberation Sans',sans-serif;color:#666666;letter-spacing:-0.27px;">סגנונות</div>
<div class="t" dir="rtl" style="left:71.5px;top:133.1px;font-size:13px;font-family:'Liberation Sans',sans-serif;color:#666666;letter-spacing:0.0px;">עריכה</div>
<div class="t" dir="rtl" style="left:74.4px;top:64.67px;font-size:13.5px;font-family:'Liberation Sans',sans-serif;color:#444444;letter-spacing:-0.4px;">חפש</div>
<div class="t" dir="rtl" style="left:60.0px;top:87.67px;font-size:13.5px;font-family:'Liberation Sans',sans-serif;color:#444444;letter-spacing:-0.1px;">החלפה</div>
<div class="t" dir="rtl" style="left:76.0px;top:110.67px;font-size:13.5px;font-family:'Liberation Sans',sans-serif;color:#444444;letter-spacing:-0.2px;">בחר</div>
<div class="t" dir="rtl" style="left:587.59px;top:79.1px;font-size:13px;font-family:'Liberation Sans',sans-serif;color:#000;letter-spacing:0.0px;transform:scaleX(1.163);transform-origin:0 0;">אבגדהוזו</div>
<div class="t" dir="rtl" style="left:600.6px;top:101.67px;font-size:13.5px;font-family:'Liberation Sans',sans-serif;color:#505050;letter-spacing:0.08px;">¶ רגיל</div>
<div class="t" dir="rtl" style="left:515.75px;top:79.1px;font-size:13px;font-family:'Liberation Sans',sans-serif;color:#000;letter-spacing:0.0px;transform:scaleX(1.1543);transform-origin:0 0;">אבגדהוזו</div>
<div class="t" dir="rtl" style="left:514.6px;top:101.67px;font-size:13.5px;font-family:'Liberation Sans',sans-serif;color:#505050;letter-spacing:-0.27px;">¶ ללא מר...</div>
<div class="t" dir="rtl" style="left:445.0px;top:74.77px;font-size:19.5px;font-family:'Liberation Serif',serif;color:#2e74b5;letter-spacing:0.0px;">אבגדהו</div>
<div class="t" dir="rtl" style="left:449.6px;top:101.67px;font-size:13.5px;font-family:'Liberation Sans',sans-serif;color:#505050;letter-spacing:0.15px;">כותרת 1</div>
<div class="t" dir="rtl" style="left:371.5px;top:76.87px;font-size:15.8px;font-family:'Liberation Serif',serif;color:#2e74b5;letter-spacing:-0.21px;">אבגדהוזח</div>
<div class="t" dir="rtl" style="left:378.0px;top:101.67px;font-size:13.5px;font-family:'Liberation Sans',sans-serif;color:#505050;letter-spacing:0.07px;">כותרת 2</div>
<div class="t" dir="rtl" style="left:301.9px;top:63.79px;font-size:35px;font-family:'Liberation Serif',serif;color:#000;letter-spacing:0.0px;transform:scaleX(0.8846);transform-origin:0 0;">אבגד</div>
<div class="t" dir="rtl" style="left:299.6px;top:101.67px;font-size:13.5px;font-family:'Liberation Sans',sans-serif;color:#505050;letter-spacing:-0.01px;">כותרת ט...</div>
<div class="t" dir="rtl" style="left:228.75px;top:79.1px;font-size:13px;font-family:'Liberation Sans',sans-serif;color:#5a5a5a;letter-spacing:1.38px;">אבגדהוז</div>
<div class="t" dir="rtl" style="left:227.75px;top:101.67px;font-size:13.5px;font-family:'Liberation Sans',sans-serif;color:#505050;letter-spacing:-0.19px;">כותרת מ...</div>
<div class="t" dir="rtl" style="left:156.6px;top:79.43px;font-size:12.6px;font-family:'Liberation Sans',sans-serif;color:#404040;letter-spacing:0.0px;font-weight:bold;font-style:italic;transform:scaleX(1.0471);transform-origin:0 0;">אבגדהוזו</div>
<div class="t" dir="rtl" style="left:154.6px;top:101.67px;font-size:13.5px;font-family:'Liberation Sans',sans-serif;color:#505050;letter-spacing:0.1px;">הדגשה ע...</div>
<div class="t" dir="rtl" style="left:1278.4px;top:710.94px;font-size:12px;font-family:'Liberation Sans',sans-serif;color:#444444;letter-spacing:-0.01px;">עמוד 1 מתוך 1</div>
<div class="t" dir="rtl" style="left:1221.6px;top:710.94px;font-size:12px;font-family:'Liberation Sans',sans-serif;color:#444444;letter-spacing:-0.17px;">0 מילים</div>
<div class="t" dir="rtl" style="left:1168.8px;top:710.1px;font-size:13px;font-family:'Liberation Sans',sans-serif;color:#444444;letter-spacing:0.0px;">עברית</div>
<div class="t" dir="rtl" style="left:7.25px;top:712.37px;font-size:11.5px;font-family:'Liberation Sans',sans-serif;color:#444444;letter-spacing:-0.25px;">90%</div>
<div class="t" dir="rtl" style="left:840.0px;top:156.25px;font-size:14px;font-family:'Liberation Sans',sans-serif;color:#444444;letter-spacing:-0.04px;font-weight:bold">נקה את כל העיצוב</div>
<div class="t" dir="rtl" style="left:848.0px;top:180.67px;font-size:13.5px;font-family:'Liberation Sans',sans-serif;color:#666666;letter-spacing:-0.02px;">הסר את כל העיצוב</div>
<div class="t" dir="rtl" style="left:831.0px;top:194.67px;font-size:13.5px;font-family:'Liberation Sans',sans-serif;color:#666666;letter-spacing:-0.21px;">מהקטע שנבחר והשאר</div>
<div class="t" dir="rtl" style="left:837.3px;top:208.67px;font-size:13.5px;font-family:'Liberation Sans',sans-serif;color:#666666;letter-spacing:-0.1px;">רק את הטקסט הרגיל</div>
<div class="t" dir="rtl" style="left:884.5px;top:222.67px;font-size:13.5px;font-family:'Liberation Sans',sans-serif;color:#666666;letter-spacing:-0.18px;">והלא מעוצב.</div>
<div class="t" dir="rtl" style="left:865.0px;top:251.25px;font-size:14px;font-family:'Liberation Sans',sans-serif;color:#2b579a;letter-spacing:-0.08px;font-weight:bold">ספר לי עוד</div>
</body></html>
